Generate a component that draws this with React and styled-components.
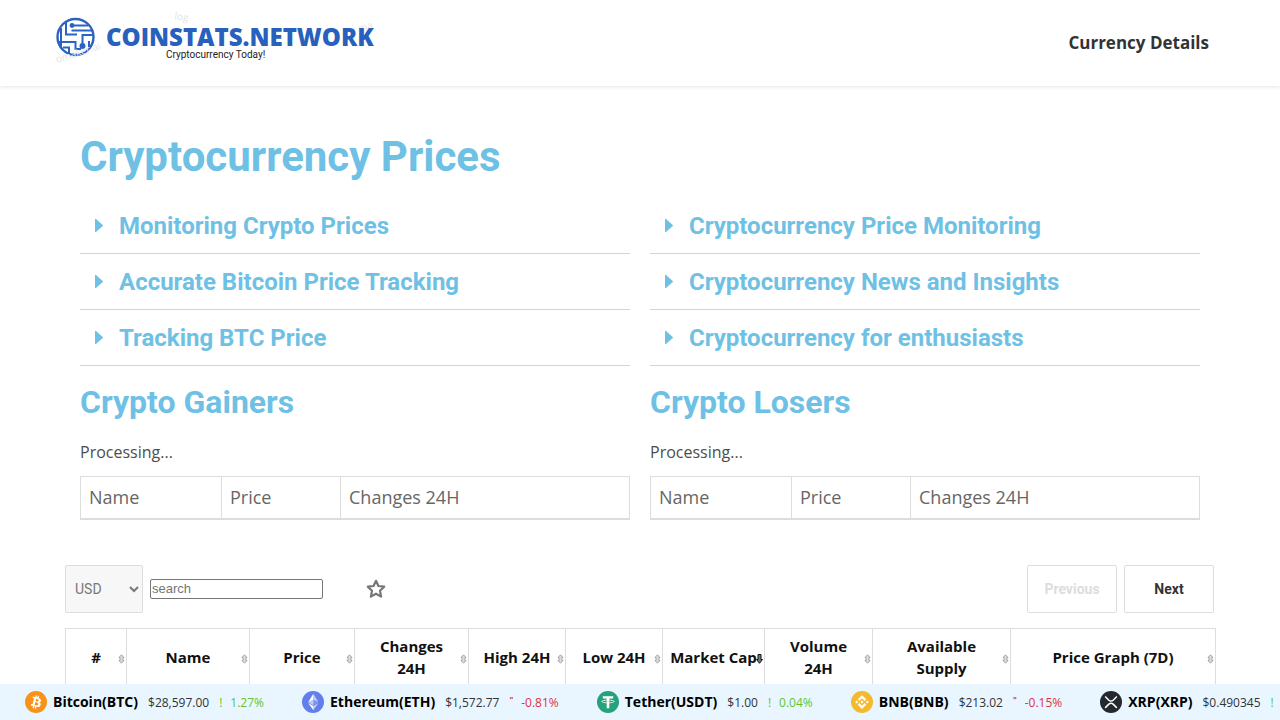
import React from 'react';
import styled, { createGlobalStyle } from 'styled-components';

const gainerColumns = ['Name', 'Price', 'Changes 24H'];

const leftTopics = ['Monitoring Crypto Prices', 'Accurate Bitcoin Price Tracking', 'Tracking BTC Price'];
const rightTopics = ['Cryptocurrency Price Monitoring', 'Cryptocurrency News and Insights', 'Cryptocurrency for enthusiasts'];

const coinColumns = [
  { label: '#', width: 61 },
  { label: 'Name', width: 123 },
  { label: 'Price', width: 105 },
  { label: 'Changes 24H', width: 114 },
  { label: 'High 24H', width: 97 },
  { label: 'Low 24H', width: 97 },
  { label: 'Market Cap', width: 102, sorted: true },
  { label: 'Volume 24H', width: 108 },
  { label: 'Available Supply', width: 138 },
  { label: 'Price Graph (7D)', width: 205 },
];

const tickerCoins = [
  { name: 'Bitcoin(BTC)', price: '$28,597.00', change: '1.27%', up: true, Icon: BitcoinIcon },
  { name: 'Ethereum(ETH)', price: '$1,572.77', change: '-0.81%', up: false, Icon: EthereumIcon },
  { name: 'Tether(USDT)', price: '$1.00', change: '0.04%', up: true, Icon: TetherIcon },
  { name: 'BNB(BNB)', price: '$213.02', change: '-0.15%', up: false, Icon: BnbIcon },
  { name: 'XRP(XRP)', price: '$0.490345', change: '0.25%', up: true, Icon: XrpIcon },
];

function Logo() {
  return (
    <LogoImage width="320" height="50" viewBox="0 0 320 50" role="img" aria-label="Coinstats.network">
      <circle cx="20.5" cy="23" r="18" fill="#fff" stroke="#2b63c0" strokeWidth="2.4" />
      <g fill="none" stroke="#2b63c0" strokeWidth="2">
        <path d="M17 11.5H33M16.5 16.5H38M11 8V20.5H22M6 14V33M38 21H27.5V31M4 28H20.5V35H26M8 33.5H14V39M34 27V33" />
      </g>
      <g fill="#2b63c0">
        <circle cx="17" cy="11.5" r="2.4" />
        <circle cx="27.5" cy="32" r="3" />
      </g>
      <g fill="#e4e4e4" fontFamily="'Open Sans', sans-serif" fontSize="10">
        <text transform="translate(2 49) rotate(-18)">omaker.ai</text>
        <text transform="translate(119 5) rotate(10)">log</text>
        <text transform="translate(304 18) rotate(-16)">ma</text>
      </g>
      <text x="51" y="32" fill="#2860bd" fontFamily="'Open Sans', sans-serif" fontSize="24" fontWeight="800">COINSTATS.NETWORK</text>
      <text x="111" y="44" fill="#222" fontFamily="Roboto, sans-serif" fontSize="10">Cryptocurrency Today!</text>
    </LogoImage>
  );
}

function BitcoinIcon() {
  return (
    <svg width="22" height="22" viewBox="0 0 32 32" aria-hidden="true">
      <circle cx="16" cy="16" r="16" fill="#f7931a" />
      <path fill="#fff" d="M23.189 14.02c.314-2.096-1.283-3.223-3.465-3.975l.708-2.84-1.728-.43-.69 2.765c-.454-.114-.92-.22-1.385-.326l.695-2.783L15.596 6l-.708 2.839c-.376-.086-.746-.17-1.104-.26l.002-.009-2.384-.595-.46 1.846s1.283.294 1.256.312c.7.175.826.638.805 1.006l-.806 3.235c.048.012.11.03.18.057l-.183-.045-1.13 4.532c-.086.212-.303.531-.793.41.018.025-1.256-.313-1.256-.313l-.858 1.978 2.25.561c.418.105.828.215 1.231.318l-.715 2.872 1.727.43.708-2.84c.472.127.93.245 1.378.357l-.706 2.828 1.728.43.715-2.866c2.948.558 5.164.333 6.097-2.333.752-2.146-.037-3.385-1.588-4.192 1.13-.26 1.98-1.003 2.207-2.538zm-3.95 5.538c-.533 2.147-4.148.986-5.32.695l.95-3.805c1.172.293 4.929.872 4.37 3.11zm.535-5.569c-.487 1.953-3.495.96-4.47.717l.86-3.45c.975.243 4.118.696 3.61 2.733z" />
    </svg>
  );
}

function EthereumIcon() {
  return (
    <svg width="22" height="22" viewBox="0 0 32 32" aria-hidden="true">
      <circle cx="16" cy="16" r="16" fill="#627eea" />
      <path fill="#c0ccf7" d="M16.5 4V12.87L24 16.22ZM16.5 21.97V28L24 17.62Z" />
      <path fill="#fff" d="M16.5 4L9 16.22L16.5 12.87ZM16.5 28V21.97L9 17.62Z" />
      <path fill="#8197ee" d="M16.5 20.57L24 16.22L16.5 12.87Z" />
      <path fill="#c0ccf7" d="M9 16.22L16.5 20.57V12.87Z" />
    </svg>
  );
}

function TetherIcon() {
  return (
    <svg width="22" height="22" viewBox="0 0 32 32" aria-hidden="true">
      <circle cx="16" cy="16" r="16" fill="#26a17b" />
      <path fill="#fff" d="M8.5 7.5H23.5V11H17.9V25H14.1V11H8.5Z" />
      <ellipse cx="16" cy="15.2" rx="9" ry="2" fill="none" stroke="#fff" strokeWidth="1.2" />
    </svg>
  );
}

function BnbIcon() {
  return (
    <svg width="22" height="22" viewBox="0 0 32 32" aria-hidden="true">
      <circle cx="16" cy="16" r="16" fill="#f3ba2f" />
      <path fill="#fff" d="M12.116 14.404L16 10.52l3.886 3.886 2.26-2.26L16 6l-6.144 6.144 2.26 2.26zM6 16l2.26-2.26L10.52 16l-2.26 2.26L6 16zm6.116 1.596L16 21.48l3.886-3.886 2.26 2.259L16 26l-6.144-6.144 2.26-2.26zM21.48 16l2.26-2.26L26 16l-2.26 2.26L21.48 16zm-3.188 0L16 18.294 13.706 16 16 13.706 18.292 16z" />
    </svg>
  );
}

function XrpIcon() {
  return (
    <svg width="22" height="22" viewBox="0 0 32 32" aria-hidden="true">
      <circle cx="16" cy="16" r="16" fill="#23292f" />
      <path fill="none" stroke="#fff" strokeWidth="2.2" d="M7.5 8L12.5 13Q16 16.2 19.5 13L24.5 8M7.5 24.5L12.5 19.5Q16 16.3 19.5 19.5L24.5 24.5" />
    </svg>
  );
}

function SortIcon({ sorted }) {
  if (sorted) {
    return (
      <svg width="7" height="10" viewBox="0 0 7 10" aria-hidden="true">
        <path d="M2 .5H5V5.5H6.5L3.5 9.3L.5 5.5H2Z" fill="#777" stroke="#111" />
      </svg>
    );
  }
  return (
    <svg width="7" height="10" viewBox="0 0 7 10" aria-hidden="true">
      <path d="M3.5 .8L6 3.5H5V6.5H6L3.5 9.2L1 6.5H2V3.5H1Z" fill="#ddd" stroke="#a5a5a5" />
    </svg>
  );
}

function TopicList({ items }) {
  return (
    <Topics>
      {items.map((item) => (
        <li key={item}>
          <TopicButton type="button" aria-expanded="false">
            <svg width="8" height="16" viewBox="0 0 8 16" aria-hidden="true">
              <path d="M0 1.5Q0 .3 1 1L7.5 6.8Q8.2 7.5 7.5 8.2L1 14Q0 14.7 0 13.5Z" fill="#6ec1e4" />
            </svg>
            {item}
          </TopicButton>
        </li>
      ))}
    </Topics>
  );
}

function MoversPanel({ title }) {
  return (
    <section>
      <SectionTitle>{title}</SectionTitle>
      <Processing>Processing...</Processing>
      <MoversTable>
        <colgroup>
          <col width="141" />
          <col width="119" />
          <col />
        </colgroup>
        <thead>
          <tr>
            {gainerColumns.map((column) => (
              <th key={column} scope="col">{column}</th>
            ))}
          </tr>
        </thead>
      </MoversTable>
    </section>
  );
}

function App() {
  return (
    <>
      <GlobalStyle />
      <Header>
        <LogoLink href="#home"><Logo /></LogoLink>
        <nav>
          <NavLink href="#details">Currency Details</NavLink>
        </nav>
      </Header>

      <main>
        <Content>
          <PageTitle>Cryptocurrency Prices</PageTitle>
          <TwoColumns>
            <TopicList items={leftTopics} />
            <TopicList items={rightTopics} />
            <MoversPanel title="Crypto Gainers" />
            <MoversPanel title="Crypto Losers" />
          </TwoColumns>
        </Content>

        <CoinSection>
          <Toolbar>
            <CurrencySelect aria-label="Currency" defaultValue="USD">
              <option>USD</option>
              <option>EUR</option>
              <option>GBP</option>
            </CurrencySelect>
            <SearchInput type="text" placeholder="search" aria-label="Search" />
            <StarButton type="button" aria-label="Watch list">
              <svg width="20" height="20" viewBox="0 0 20 20" aria-hidden="true">
                <path d="M10 1.8L12.4 7L18.2 7.7L14 11.7L15.1 17.6L10 14.7L4.9 17.6L6 11.7L1.8 7.7L7.6 7Z" fill="none" stroke="#777" strokeWidth="2.2" strokeLinejoin="round" />
              </svg>
            </StarButton>
            <Pager>
              <PageButton type="button" disabled>Previous</PageButton>
              <PageButton type="button">Next</PageButton>
            </Pager>
          </Toolbar>

          <CoinTable>
            <colgroup>
              {coinColumns.map((column) => (
                <col key={column.label} width={column.width} />
              ))}
            </colgroup>
            <thead>
              <tr>
                {coinColumns.map((column) => (
                  <CoinHeading key={column.label} scope="col" $tight={column.sorted}>
                    {column.label}
                    <SortMark><SortIcon sorted={column.sorted} /></SortMark>
                  </CoinHeading>
                ))}
              </tr>
            </thead>
          </CoinTable>
        </CoinSection>
      </main>

      <Ticker>
        {tickerCoins.map(({ name, price, change, up, Icon }) => (
          <TickerItem key={name}>
            <Icon />
            <CoinName>{name}</CoinName>
            <CoinPrice>{price}</CoinPrice>
            <CoinChange $up={up}>
              <ChangeMark $up={up}>{up ? '!' : '"'}</ChangeMark>
              {change}
            </CoinChange>
          </TickerItem>
        ))}
      </Ticker>
    </>
  );
}

export default App;

const GlobalStyle = createGlobalStyle`
  *, *::before, *::after {
    box-sizing: border-box;
  }
  body {
    margin: 0;
    background: #fff;
    color: #4d4d4d;
    font-family: "Open Sans", "Noto Sans", sans-serif;
    font-size: 16px;
    overflow-x: hidden;
  }
`;

const Header = styled.header`
  display: flex;
  align-items: center;
  justify-content: space-between;
  height: 86px;
  padding: 0 71px 0 55px;
  box-shadow: 0 1px 4px rgba(0, 0, 0, 0.1);
`;

const LogoLink = styled.a`
  display: flex;
  padding-bottom: 8px;
`;

const LogoImage = styled.svg`
  overflow: visible;
`;

const NavLink = styled.a`
  display: block;
  padding-bottom: 2px;
  color: #333;
  font-size: 17px;
  font-weight: 700;
  text-decoration: none;
`;

const Content = styled.div`
  max-width: 1120px;
  margin: 0 auto;
  padding-top: 46px;
`;

const PageTitle = styled.h1`
  margin: 0 0 16px;
  color: #6ec1e4;
  font: 700 42px/50px Roboto, sans-serif;
`;

const TwoColumns = styled.div`
  display: grid;
  grid-template-columns: repeat(2, minmax(0, 1fr));
  column-gap: 20px;
`;

const Topics = styled.ul`
  margin: 0;
  padding: 0;
  list-style: none;
`;

const TopicButton = styled.button`
  display: flex;
  align-items: center;
  gap: 16px;
  width: 100%;
  height: 56px;
  padding: 0 15px;
  border: 0;
  border-bottom: 1px solid #d4d4d4;
  background: none;
  color: #6ec1e4;
  font: 700 24px/24px Roboto, sans-serif;
  text-align: left;
`;

const SectionTitle = styled.h2`
  margin: 20px 0 22px;
  color: #6ec1e4;
  font: 700 32px/32px Roboto, sans-serif;
`;

const Processing = styled.p`
  margin: 0 0 12px;
  font-size: 16px;
  line-height: 24px;
`;

const MoversTable = styled.table`
  width: 100%;
  table-layout: fixed;
  border-collapse: collapse;
  border: 1px solid #ddd;
  border-bottom-width: 2px;

  th {
    height: 42px;
    padding: 0 8px;
    border-right: 1px solid #ddd;
    color: #666;
    font-size: 18px;
    font-weight: 400;
    text-align: left;
  }
`;

const CoinSection = styled.section`
  max-width: 1150px;
  margin: 45px auto 0;
`;

const Toolbar = styled.div`
  display: flex;
  align-items: center;
  margin-bottom: 15px;
`;

const CurrencySelect = styled.select`
  width: 78px;
  height: 48px;
  padding: 0 5px;
  border: 1px solid #ddd;
  border-radius: 2px;
  background: #f7f7f7;
  color: #777;
  font: 400 14px Roboto, sans-serif;
`;

const SearchInput = styled.input`
  width: 173px;
  height: 20px;
  margin-left: 7px;
  padding: 1px;
  border: 1px solid #767676;
  border-radius: 2px;
  font: 400 13px "Liberation Sans", sans-serif;
`;

const StarButton = styled.button`
  display: flex;
  margin-left: 43px;
  padding: 0;
  border: 0;
  background: none;
`;

const Pager = styled.div`
  display: flex;
  gap: 7px;
  margin-left: auto;
  padding-right: 1px;
`;

const PageButton = styled.button`
  width: 90px;
  height: 48px;
  border: 1px solid #ddd;
  border-radius: 2px;
  background: #fff;
  color: #333;
  font: 700 14px Roboto, sans-serif;

  &:disabled {
    color: #ddd;
  }
`;

const CoinTable = styled.table`
  width: 100%;
  table-layout: fixed;
  border-collapse: collapse;
  border: 1px solid #ddd;
`;

const CoinHeading = styled.th`
  position: relative;
  padding: 6px ${(props) => (props.$tight ? '0' : '12px')} 10px;
  border-right: 1px solid #ddd;
  color: #111;
  font-size: 15px;
  font-weight: 700;
  line-height: 22px;
`;

const SortMark = styled.span`
  position: absolute;
  top: 25px;
  right: 1px;
  display: flex;
`;

const Ticker = styled.div`
  position: fixed;
  right: 0;
  bottom: 0;
  left: 0;
  display: flex;
  gap: 38px;
  height: 36px;
  padding-left: 25px;
  overflow: hidden;
  background: #e9f6ff;
  white-space: nowrap;
`;

const TickerItem = styled.div`
  display: flex;
  flex-shrink: 0;
  align-items: center;
`;

const CoinName = styled.span`
  margin-left: 6px;
  padding-bottom: 2px;
  color: #000;
  font-size: 14px;
  font-weight: 700;
`;

const CoinPrice = styled.span`
  margin-left: 10px;
  color: #333;
  font-size: 12px;
`;

const CoinChange = styled.span`
  display: flex;
  margin-left: 10px;
  color: ${(props) => (props.$up ? '#5fc52e' : '#e03140')};
  font-size: 12px;
`;

const ChangeMark = styled.span`
  margin-right: 8px;
  font-size: ${(props) => (props.$up ? '12px' : '8px')};
  font-weight: ${(props) => (props.$up ? '400' : '700')};
`;
